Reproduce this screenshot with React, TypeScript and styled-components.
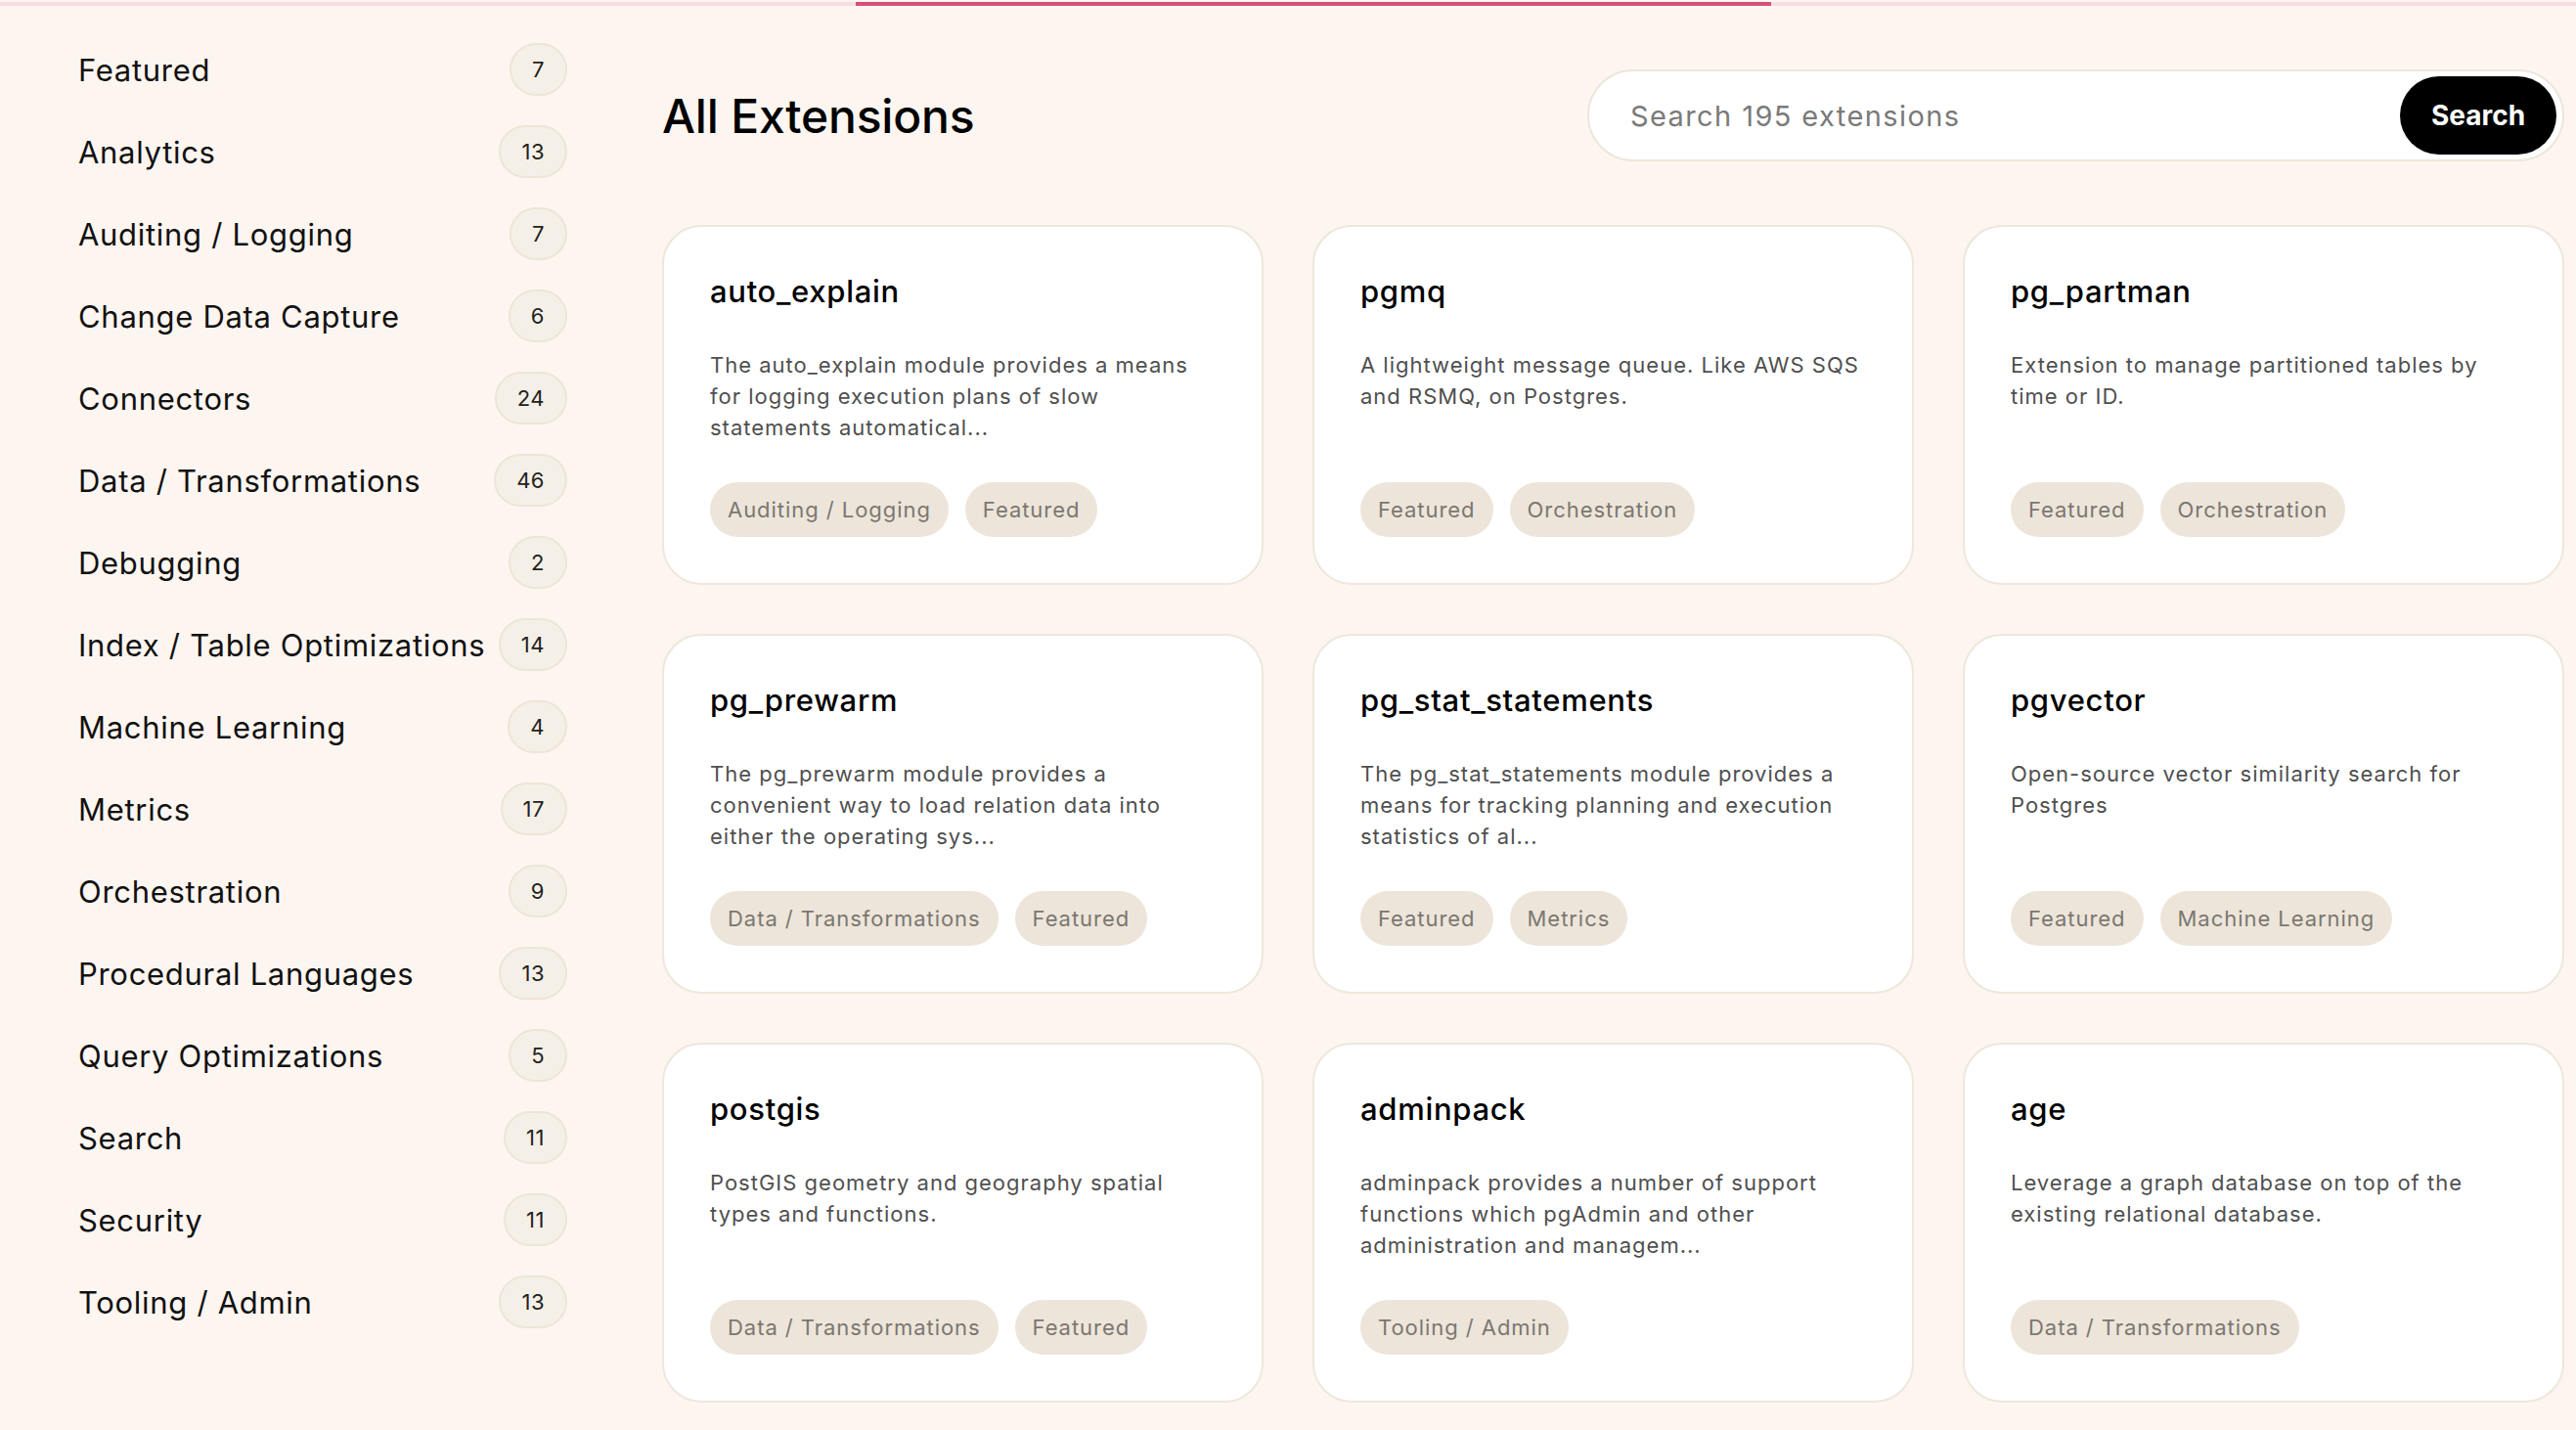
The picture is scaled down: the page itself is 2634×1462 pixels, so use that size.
import React from "react";
import styled, { createGlobalStyle } from "styled-components";

const Global = createGlobalStyle`
  html, body {
    margin: 0;
    padding: 0;
    background: #fdf5f0;
  }
  body {
    font-family: Inter, "Noto Sans", "Liberation Sans", sans-serif;
    color: #111;
    -webkit-font-smoothing: antialiased;
  }
  * { box-sizing: border-box; }
`;

const Page = styled.div`
  min-height: 1462px;
  background: #fdf5f0;
  display: flex;
  flex-direction: column;
`;

const TopBar = styled.div`
  margin-top: 2px;
  height: 4px;
  background: #f6dfe3;
  display: flex;
`;

const Progress = styled.div`
  margin-left: 875px;
  width: 936px;
  height: 100%;
  background: #d4507a;
`;

const Layout = styled.div`
  display: flex;
  align-items: flex-start;
  padding-left: 80px;
  padding-right: 13px;
`;

const Sidebar = styled.nav`
  width: 500px;
  flex: none;
  padding-top: 23px;
  display: flex;
  flex-direction: column;
`;

const CatRow = styled.div`
  height: 84px;
  display: flex;
  align-items: center;
  justify-content: space-between;
`;

const CatLabel = styled.span`
  font-size: 31px;
  font-weight: 400;
  color: #111;
  letter-spacing: 0.7px;
  white-space: nowrap;
`;

const Count = styled.span`
  height: 54px;
  min-width: 56px;
  padding: 0 21px;
  border-radius: 27px;
  background: #f5f0e7;
  border: 2px solid #ece5d8;
  display: inline-flex;
  align-items: center;
  justify-content: center;
  font-size: 22px;
  letter-spacing: 0.5px;
  color: #222;
`;

const Main = styled.main`
  flex: 1;
  margin-left: 97px;
  padding-top: 65px;
  display: flex;
  flex-direction: column;
`;

const Header = styled.div`
  height: 94px;
  display: flex;
  align-items: center;
  justify-content: space-between;
`;

const Title = styled.h1`
  margin: 0;
  font-size: 48px;
  font-weight: 500;
  color: #000;
  letter-spacing: -0.2px;
`;

const SearchBox = styled.form`
  width: 999px;
  height: 94px;
  background: #fff;
  border: 2px solid #ede6da;
  border-radius: 47px;
  display: flex;
  align-items: center;
  padding: 0 6px 0 40px;
`;

const SearchInput = styled.input`
  flex: 1;
  border: none;
  outline: none;
  background: transparent;
  font-family: inherit;
  font-size: 29px;
  letter-spacing: 1.4px;
  color: #111;
  &::placeholder {
    color: #7a7a7a;
  }
`;

const SearchButton = styled.button`
  width: 160px;
  height: 80px;
  border: none;
  border-radius: 40px;
  background: #000;
  color: #fff;
  font-family: inherit;
  font-size: 28px;
  font-weight: 700;
  cursor: pointer;
`;

const Grid = styled.div`
  margin-top: 65px;
  display: grid;
  grid-template-columns: repeat(3, 615px);
  column-gap: 50px;
  row-gap: 50px;
`;

const Card = styled.div`
  height: 368px;
  background: #fff;
  border: 2px solid #eee7db;
  border-radius: 40px;
  padding: 47px;
  display: flex;
  flex-direction: column;
`;

const CardTitle = styled.h2`
  margin: 0;
  font-size: 31px;
  line-height: 38px;
  font-weight: 500;
  letter-spacing: 0.7px;
  color: #000;
`;

const CardDesc = styled.p`
  margin: 40px 0 0;
  font-size: 22px;
  line-height: 32px;
  letter-spacing: 1px;
  color: #4f4f4f;
`;

const Tags = styled.div`
  margin-top: auto;
  display: flex;
  gap: 17px;
`;

const Tag = styled.span`
  height: 56px;
  padding: 0 18px;
  border-radius: 28px;
  background: #ede5da;
  color: #7b7770;
  font-size: 22px;
  letter-spacing: 0.95px;
  display: inline-flex;
  align-items: center;
`;

const categories: [string, number][] = [
  ["Featured", 7],
  ["Analytics", 13],
  ["Auditing / Logging", 7],
  ["Change Data Capture", 6],
  ["Connectors", 24],
  ["Data / Transformations", 46],
  ["Debugging", 2],
  ["Index / Table Optimizations", 14],
  ["Machine Learning", 4],
  ["Metrics", 17],
  ["Orchestration", 9],
  ["Procedural Languages", 13],
  ["Query Optimizations", 5],
  ["Search", 11],
  ["Security", 11],
  ["Tooling / Admin", 13],
];

const extensions: { name: string; desc: string; tags: string[] }[] = [
  {
    name: "auto_explain",
    desc: "The auto_explain module provides a means for logging execution plans of slow statements automatical...",
    tags: ["Auditing / Logging", "Featured"],
  },
  {
    name: "pgmq",
    desc: "A lightweight message queue. Like AWS SQS and RSMQ, on Postgres.",
    tags: ["Featured", "Orchestration"],
  },
  {
    name: "pg_partman",
    desc: "Extension to manage partitioned tables by time or ID.",
    tags: ["Featured", "Orchestration"],
  },
  {
    name: "pg_prewarm",
    desc: "The pg_prewarm module provides a convenient way to load relation data into either the operating sys...",
    tags: ["Data / Transformations", "Featured"],
  },
  {
    name: "pg_stat_statements",
    desc: "The pg_stat_statements module provides a means for tracking planning and execution statistics of al...",
    tags: ["Featured", "Metrics"],
  },
  {
    name: "pgvector",
    desc: "Open-source vector similarity search for Postgres",
    tags: ["Featured", "Machine Learning"],
  },
  {
    name: "postgis",
    desc: "PostGIS geometry and geography spatial types and functions.",
    tags: ["Data / Transformations", "Featured"],
  },
  {
    name: "adminpack",
    desc: "adminpack provides a number of support functions which pgAdmin and other administration and managem...",
    tags: ["Tooling / Admin"],
  },
  {
    name: "age",
    desc: "Leverage a graph database on top of the existing relational database.",
    tags: ["Data / Transformations"],
  },
];

export default function App() {
  return (
    <Page>
      <Global />
      <TopBar>
        <Progress />
      </TopBar>
      <Layout>
        <Sidebar>
          {categories.map(([label, n]) => (
            <CatRow key={label}>
              <CatLabel>{label}</CatLabel>
              <Count>{n}</Count>
            </CatRow>
          ))}
        </Sidebar>
        <Main>
          <Header>
            <Title>All Extensions</Title>
            <SearchBox onSubmit={(e) => e.preventDefault()}>
              <SearchInput placeholder="Search 195 extensions" />
              <SearchButton type="submit">Search</SearchButton>
            </SearchBox>
          </Header>
          <Grid>
            {extensions.map((ext) => (
              <Card key={ext.name}>
                <CardTitle>{ext.name}</CardTitle>
                <CardDesc>{ext.desc}</CardDesc>
                <Tags>
                  {ext.tags.map((t) => (
                    <Tag key={t}>{t}</Tag>
                  ))}
                </Tags>
              </Card>
            ))}
          </Grid>
        </Main>
      </Layout>
    </Page>
  );
}
